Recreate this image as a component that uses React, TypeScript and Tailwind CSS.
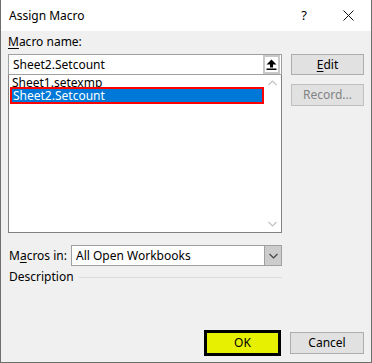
import React from 'react';

const font = { fontFamily: '"Segoe UI", "Noto Sans", sans-serif' };

const Chevron: React.FC<{ dir: 'up' | 'down'; className?: string }> = ({ dir, className }) => (
  <svg width="9" height="6" viewBox="0 0 9 6" className={className}>
    {dir === 'up' ? (
      <path d="M0.5 5 L4.5 1 L8.5 5" fill="none" stroke="currentColor" strokeWidth={1.2} />
    ) : (
      <path d="M0.5 1 L4.5 5 L8.5 1" fill="none" stroke="currentColor" strokeWidth={1.2} />
    )}
  </svg>
);

const App: React.FC = () => {
  return (
    <div
      className="w-[372px] h-[363px] flex flex-col border-x border-b border-[#6e6e6e] text-[12px] text-black bg-[#f0f0f0]"
      style={font}
    >
      {/* title bar */}
      <div className="h-[31px] bg-white flex items-center pl-[8px] pr-[17px] shrink-0">
        <span className="flex-1 leading-none">Assign Macro</span>
        <span className="mr-[36px] text-[13px] leading-none">?</span>
        <svg width="11" height="11" viewBox="0 0 11 11">
          <path d="M0.5 0.5 L10.5 10.5 M10.5 0.5 L0.5 10.5" stroke="#111" strokeWidth={1} />
        </svg>
      </div>

      <div className="flex-1 flex flex-col pl-[7px] pr-[7px] pb-[6px]">
        <div className="flex gap-[9px]">
          {/* left column */}
          <div className="w-[274px] flex flex-col">
            <div className="pt-[3px] h-[19px] leading-[16px]">
              <span className="underline underline-offset-2">M</span>acro name:
            </div>
            <div className="mt-[4px] h-[21px] bg-white border border-[#a0a0a0] flex items-center pl-[4px] pr-[1px]">
              <span className="flex-1 leading-none">Sheet2.Setcount</span>
              <div className="w-[17px] h-[19px] border-2 border-[#c8c8c8] bg-white flex items-center justify-center">
                <svg width="11" height="11" viewBox="0 0 11 11">
                  <path d="M5.5 0.5 L10.5 5.5 L7 5.5 L7 8.5 L4 8.5 L4 5.5 L0.5 5.5 Z" fill="#000" />
                  <rect x="0.5" y="9.5" width="10" height="1.5" fill="#000" />
                </svg>
              </div>
            </div>
            <div className="h-[158px] bg-white border border-[#828282] border-t-0 flex">
              <div className="flex-1 flex flex-col pl-[1px] pt-[1px]">
                <div className="h-[13px] leading-[13px] pl-[2px] overflow-hidden">Sheet1.setexmp</div>
                <div className="relative -mt-[2px] h-[17px] bg-[#0078d7] border-2 border-[#ff0000] text-white flex items-center pl-[1px] leading-none">
                  Sheet2.Setcount
                </div>
              </div>
              <div className="w-[17px] flex flex-col items-center justify-between py-[5px] text-[#c2c2c2]">
                <Chevron dir="up" />
                <Chevron dir="down" />
              </div>
            </div>
          </div>

          {/* right column */}
          <div className="flex flex-col pt-[23px] w-[73px]">
            <div className="h-[21px] bg-[#e1e1e1] border border-[#adadad] flex items-center justify-center leading-none">
              <span>
                <span className="underline underline-offset-2">E</span>dit
              </span>
            </div>
            <div className="mt-[9px] h-[22px] bg-[#e1e1e1] border border-[#bfbfbf] flex items-center justify-center leading-none text-[#838383]">
              Record...
            </div>
          </div>
        </div>

        {/* macros in */}
        <div className="mt-[12px] flex items-center w-[274px]">
          <span className="pl-[1px] w-[63px] leading-none">
            M<span className="underline underline-offset-2">a</span>cros in:
          </span>
          <div className="flex-1 h-[21px] bg-white border border-[#a0a0a0] flex items-center">
            <span className="flex-1 pl-[4px] leading-none">All Open Workbooks</span>
            <div className="w-[17px] h-full bg-[#cccccc] border-l border-[#a0a0a0] flex items-center justify-center text-[#444]">
              <Chevron dir="down" />
            </div>
          </div>
        </div>

        {/* description */}
        <div className="mt-[3px] h-[16px] flex items-center w-[274px]">
          <span className="pl-[1px] leading-none">Description</span>
          <div className="flex-1 ml-[5px] h-px bg-[#dcdcdc]" />
        </div>

        <div className="flex-1" />

        {/* buttons */}
        <div className="flex items-center justify-end gap-[9px]">
          <div className="w-[77px] h-[26px] bg-[#e6f000] border-[3px] border-black flex items-center justify-center leading-none">
            OK
          </div>
          <div className="w-[74px] h-[22px] bg-[#e1e1e1] border border-[#adadad] flex items-center justify-center leading-none">
            Cancel
          </div>
        </div>
      </div>
    </div>
  );
};

export default App;
